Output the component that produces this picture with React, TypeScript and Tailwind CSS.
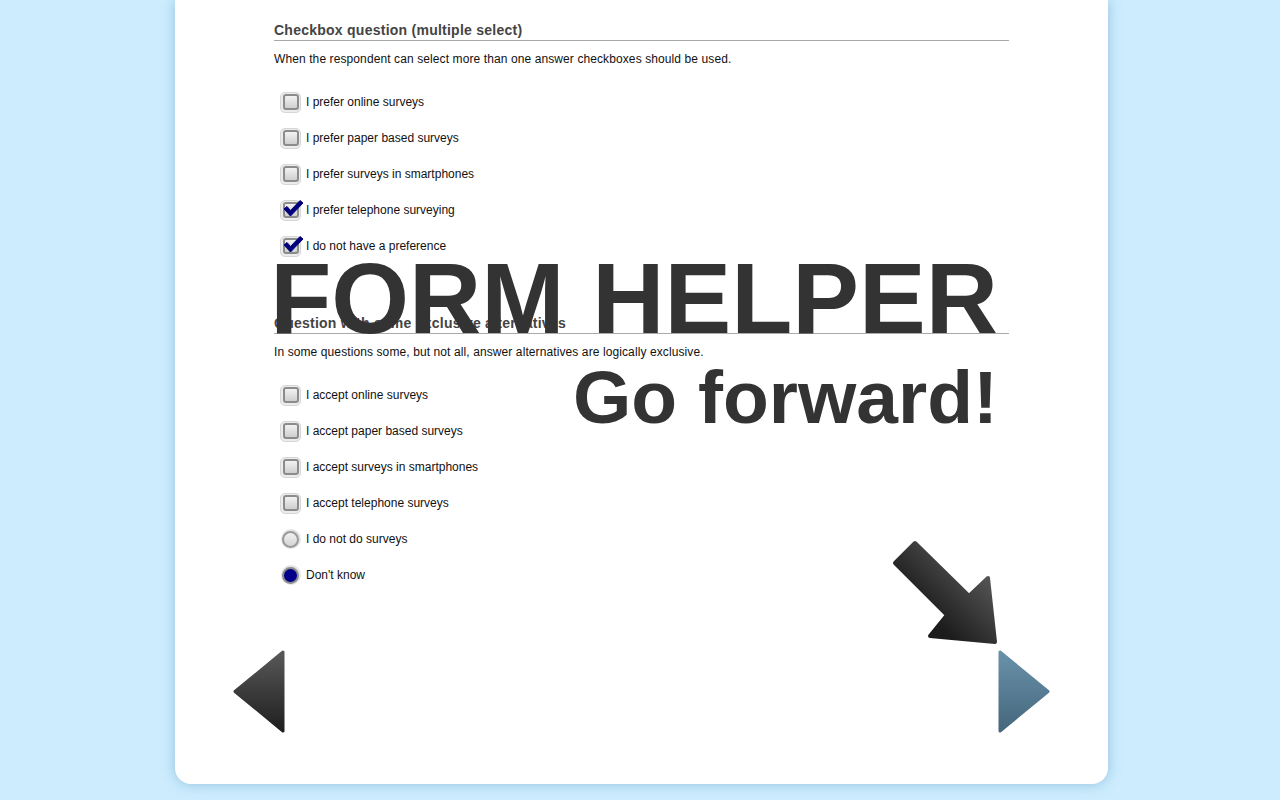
import React from 'react'

type Option = {
  label: string
  kind: 'checkbox' | 'radio'
  checked?: boolean
}

const firstOptions: Option[] = [
  { label: 'I prefer online surveys', kind: 'checkbox' },
  { label: 'I prefer paper based surveys', kind: 'checkbox' },
  { label: 'I prefer surveys in smartphones', kind: 'checkbox' },
  { label: 'I prefer telephone surveying', kind: 'checkbox', checked: true },
  { label: 'I do not have a preference', kind: 'checkbox', checked: true },
]

const secondOptions: Option[] = [
  { label: 'I accept online surveys', kind: 'checkbox' },
  { label: 'I accept paper based surveys', kind: 'checkbox' },
  { label: 'I accept surveys in smartphones', kind: 'checkbox' },
  { label: 'I accept telephone surveys', kind: 'checkbox' },
  { label: 'I do not do surveys', kind: 'radio' },
  { label: "Don't know", kind: 'radio', checked: true },
]

const CheckBox = ({ checked }: { checked?: boolean }) => (
  <div className="relative w-[21px] h-[21px] rounded-[5px] bg-[#ececec] border border-[#d6d6d6] flex items-center justify-center">
    <div className="w-[16px] h-[16px] rounded-[3px] border-2 border-[#8c8c8c] bg-gradient-to-b from-[#f2f2f2] to-[#cfcfcf]"></div>
    {checked && (
      <svg
        className="absolute left-[1px] top-[-3px]"
        width="22"
        height="22"
        viewBox="0 0 22 22"
      >
        <path
          d="M2 11 L5 8.5 L8.5 12.5 L18 2.5 L21 5 L8.5 18 Z"
          fill="#00007a"
          stroke="#00007a"
          strokeWidth="1"
          strokeLinejoin="round"
        />
      </svg>
    )}
  </div>
)

const Radio = ({ checked }: { checked?: boolean }) => (
  <div className="w-[20px] h-[20px] rounded-full bg-[#e4e4e4] flex items-center justify-center">
    <div
      className={
        checked
          ? 'w-[17px] h-[17px] rounded-full border-2 border-[#8c8c8c] bg-[#00008b]'
          : 'w-[17px] h-[17px] rounded-full border-2 border-[#9a9a9a] bg-gradient-to-b from-[#f2f2f2] to-[#d4d4d4]'
      }
    ></div>
  </div>
)

const OptionRow = ({ option }: { option: Option }) => (
  <div className="h-[36px] flex items-center pl-[6px]">
    {option.kind === 'checkbox' ? (
      <CheckBox checked={option.checked} />
    ) : (
      <div className="w-[21px] flex justify-center">
        <Radio checked={option.checked} />
      </div>
    )}
    <span className="ml-[5px] text-[12px] leading-[16px] text-[#111]">
      {option.label}
    </span>
  </div>
)

const Question = ({
  title,
  description,
  options,
  className,
}: {
  title: string
  description: string
  options: Option[]
  className?: string
}) => (
  <div className={className}>
    <h2 className="text-[14px] leading-[18px] font-bold tracking-[0.25px] text-[#444] pt-[1px] pb-[1px] border-b border-[#aaaaaa]">
      {title}
    </h2>
    <p className="mt-[10px] text-[12px] leading-[16px] tracking-[0.1px] text-[#111]">
      {description}
    </p>
    <div className="mt-[17px]">
      {options.map((o) => (
        <OptionRow key={o.label} option={o} />
      ))}
    </div>
  </div>
)

const App = () => {
  return (
    <div
      className="w-full h-[800px] bg-[#cdedfe] overflow-hidden"
      style={{ fontFamily: '"Liberation Sans", Arial, sans-serif' }}
    >
      <div className="relative ml-[175px] w-[933px] h-[784px] bg-white rounded-b-[16px] shadow-[0_0_14px_rgba(40,110,160,0.35)] flex flex-col">
        {/* Survey content */}
        <div className="px-[99px] pt-[20px]">
          <Question
            title="Checkbox question (multiple select)"
            description="When the respondent can select more than one answer checkboxes should be used."
            options={firstOptions}
          />
          <Question
            className="mt-[49px]"
            title="Question with some exclusive alternatives"
            description="In some questions some, but not all, answer alternatives are logically exclusive."
            options={secondOptions}
          />
        </div>

        {/* Navigation */}
        <div className="mt-auto mb-[51px] px-[58px] flex justify-between items-center">
          <svg width="52" height="83" viewBox="0 0 52 83">
            <defs>
              <linearGradient id="prevGrad" x1="0" y1="0" x2="0" y2="1">
                <stop offset="0" stopColor="#585858" />
                <stop offset="1" stopColor="#1f1f1f" />
              </linearGradient>
            </defs>
            <path
              d="M50 2 L50 81 L2 41.5 Z"
              fill="url(#prevGrad)"
              stroke="url(#prevGrad)"
              strokeWidth="3"
              strokeLinejoin="round"
            />
          </svg>
          <svg width="52" height="83" viewBox="0 0 52 83">
            <defs>
              <linearGradient id="nextGrad" x1="0" y1="0" x2="0" y2="1">
                <stop offset="0" stopColor="#6891a9" />
                <stop offset="1" stopColor="#46677d" />
              </linearGradient>
            </defs>
            <path
              d="M2 2 L2 81 L50 41.5 Z"
              fill="url(#nextGrad)"
              stroke="url(#nextGrad)"
              strokeWidth="3"
              strokeLinejoin="round"
            />
          </svg>
        </div>

        {/* Form helper overlay */}
        <div className="absolute top-[248px] right-[110px] text-right font-bold text-[#333] pointer-events-none">
          <div className="text-[100px] leading-[100px] whitespace-nowrap">
            FORM HELPER
          </div>
          <div className="mt-[12px] text-[75px] leading-[75px] whitespace-nowrap">
            Go forward!
          </div>
        </div>

        <svg
          className="absolute left-[715px] top-[540px]"
          width="110"
          height="110"
          viewBox="0 0 110 110"
        >
          <defs>
            <linearGradient id="hintGrad" x1="0" y1="1" x2="1" y2="0">
              <stop offset="0.3" stopColor="#1c1c1c" />
              <stop offset="0.8" stopColor="#555555" />
            </linearGradient>
          </defs>
          <path
            d="M25 3 L79 56 L98 38 L105 102 L40 96 L57 75 L5 23 Z"
            fill="url(#hintGrad)"
            stroke="url(#hintGrad)"
            strokeWidth="4"
            strokeLinejoin="round"
          />
        </svg>
      </div>
    </div>
  )
}

export default App
